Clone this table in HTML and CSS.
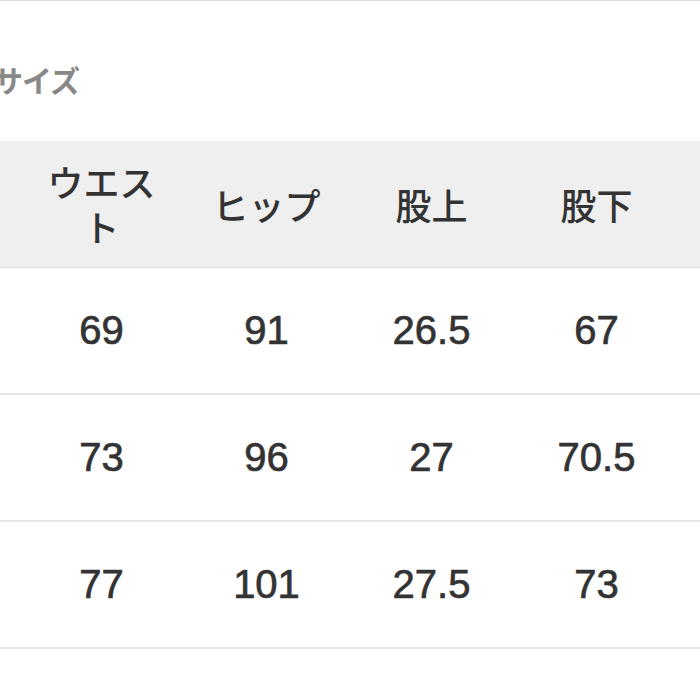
FILE: index.html
```html
<!DOCTYPE html>
<html lang="ja">
<head>
<meta charset="utf-8">
<link rel="stylesheet" href="styles.css">
</head>
<body>
<section class="section">
  <h2 class="title">サイズ</h2>
  <div class="table">
    <div class="row head">
      <div class="cell"></div>
      <div class="cell">ウエスト</div>
      <div class="cell">ヒップ</div>
      <div class="cell">股上</div>
      <div class="cell">股下</div>
      <div class="cell"></div>
    </div>
    <div class="row">
      <div class="cell"></div>
      <div class="cell num">69</div>
      <div class="cell num">91</div>
      <div class="cell num">26.5</div>
      <div class="cell num">67</div>
      <div class="cell"></div>
    </div>
    <div class="row">
      <div class="cell"></div>
      <div class="cell num">73</div>
      <div class="cell num">96</div>
      <div class="cell num">27</div>
      <div class="cell num">70.5</div>
      <div class="cell"></div>
    </div>
    <div class="row">
      <div class="cell"></div>
      <div class="cell num">77</div>
      <div class="cell num">101</div>
      <div class="cell num">27.5</div>
      <div class="cell num">73</div>
      <div class="cell"></div>
    </div>
  </div>
</section>
</body>
</html>
```

FILE: styles.css
```css
html, body {
  margin: 0;
  padding: 0;
  overflow: hidden;
  background: #ffffff;
}
body {
  width: 700px;
  height: 700px;
  font-family: "Noto Sans CJK JP", "Liberation Sans", sans-serif;
  color: #333333;
}
.section {
  border-top: 1px solid #dddddd;
}
.title {
  margin: 57px 0 0 -7px;
  font-size: 30px;
  line-height: 42px;
  font-weight: 700;
  color: #888888;
  letter-spacing: -1px;
}
.table {
  margin-top: 41px;
  margin-left: -146px;
  width: 990px;
}
.row {
  display: grid;
  grid-template-columns: repeat(6, 165px);
  height: 127px;
  box-sizing: border-box;
  border-bottom: 2px solid #e6e6e6;
  align-items: center;
  text-align: center;
}
.row.head {
  background: #efefef;
  border-bottom: 1px solid #e0e0e0;
}
.cell {
  padding: 0 22px;
  font-size: 36px;
  line-height: 45px;
  font-weight: 500;
  color: #333333;
}
.cell.num {
  font-family: "Liberation Sans", "Noto Sans CJK JP", sans-serif;
  font-size: 40px;
  font-weight: 400;
  color: #333333;
  -webkit-text-stroke: 0.7px #333333;
}
```
